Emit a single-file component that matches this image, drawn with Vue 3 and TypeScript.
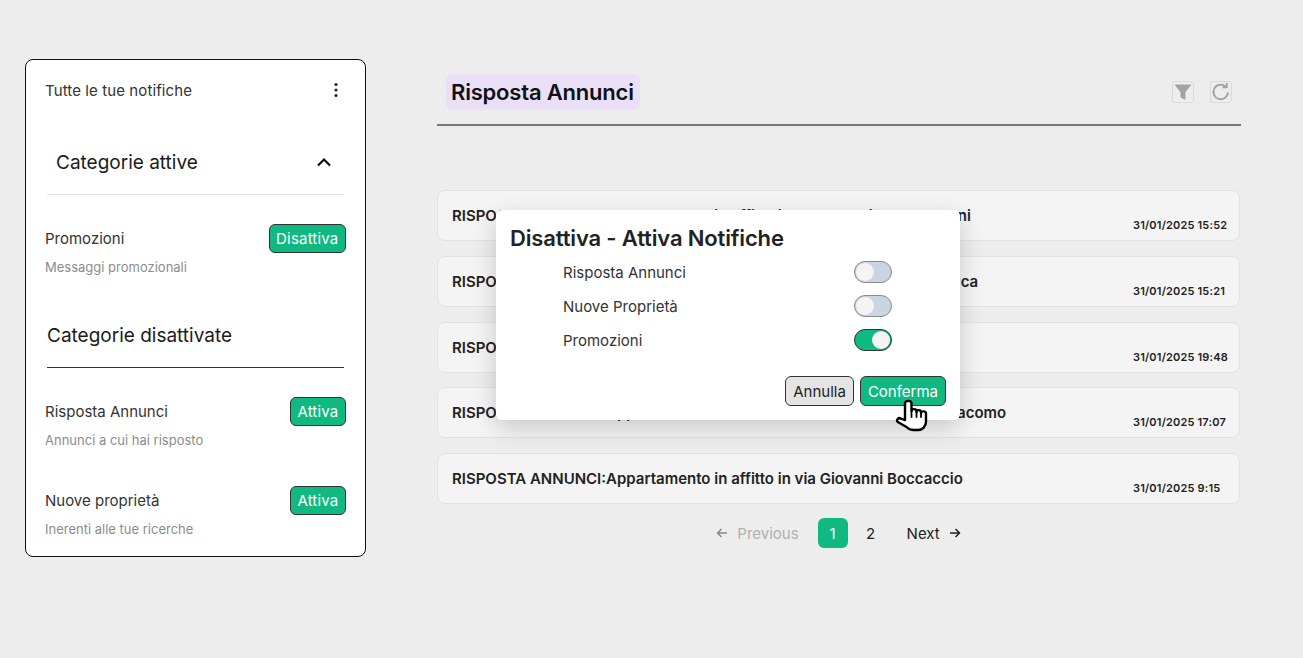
<script setup lang="ts">
import { ref } from 'vue'

const activeCats = [{ name: 'Promozioni', desc: 'Messaggi promozionali' }]
const disabledCats = [
  { name: 'Risposta Annunci', desc: 'Annunci a cui hai risposto' },
  { name: 'Nuove proprietà', desc: 'Inerenti alle tue ricerche' },
]

const notifications = [
  { title: 'RISPOSTA ANNUNCI:Appartamento in affitto in largo Guglielmo Marconi', date: '31/01/2025 15:52' },
  { title: 'RISPOSTA ANNUNCI:Appartamento in affitto in piazzale della Repubblica', date: '31/01/2025 15:21' },
  { title: 'RISPOSTA ANNUNCI:Appartamento in affitto in via Roma', date: '31/01/2025 19:48' },
  { title: 'RISPOSTA ANNUNCI:Appartamento in affitto in via San Giovanni De Giacomo', date: '31/01/2025 17:07' },
  { title: 'RISPOSTA ANNUNCI:Appartamento in affitto in via Giovanni Boccaccio', date: '31/01/2025 9:15' },
]

const toggles = ref([
  { label: 'Risposta Annunci', on: false },
  { label: 'Nuove Proprietà', on: false },
  { label: 'Promozioni', on: true },
])
</script>

<template>
  <div class="page">
    <aside class="side">
      <div class="side-head">
        <span>Tutte le tue notifiche</span>
        <svg width="16" height="16" viewBox="0 0 16 16" fill="#222">
          <circle cx="8" cy="2.500" r="1.600" />
          <circle cx="8" cy="8" r="1.600" />
          <circle cx="8" cy="13.500" r="1.600" />
        </svg>
      </div>

      <div class="acc-head">
        <span>Categorie attive</span>
        <svg width="16" height="10" viewBox="0 0 16 10" fill="none" stroke="#111" stroke-width="2.200">
          <path d="M2 8.500 8 2.500l6 6" />
        </svg>
      </div>
      <div v-for="c in activeCats" :key="c.name" class="cat first">
        <div class="cat-row">
          <span>{{ c.name }}</span>
          <button class="green small">Disattiva</button>
        </div>
        <p>{{ c.desc }}</p>
      </div>

      <div class="off-head">Categorie disattivate</div>
      <div v-for="c in disabledCats" :key="c.name" class="cat">
        <div class="cat-row">
          <span>{{ c.name }}</span>
          <button class="green small">Attiva</button>
        </div>
        <p>{{ c.desc }}</p>
      </div>
    </aside>

    <main class="main">
      <header class="main-head">
        <h1>Risposta Annunci</h1>
        <div class="tools">
          <span class="tool">
            <svg width="18" height="18" viewBox="0 0 18 18" fill="#a3a3a3">
              <path d="M0.500 1.500h17L11.500 9.200V17l-5-2.400V9.200z" />
            </svg>
          </span>
          <span class="tool">
            <svg width="20" height="20" viewBox="0 0 20 20" fill="none" stroke="#a3a3a3" stroke-width="1.900">
              <path d="M17 10.500a7.300 7.300 0 1 1-2.400-6" />
              <path d="M15.800 1v4.200h-4.300" />
            </svg>
          </span>
        </div>
      </header>

      <div class="list">
        <div v-for="n in notifications" :key="n.date" class="item">
          <span class="title">{{ n.title }}</span>
          <span class="date">{{ n.date }}</span>
        </div>
      </div>

      <nav class="pager">
        <span class="prev">
          <svg width="12" height="12" viewBox="0 0 12 12" fill="none" stroke="#8a8a8a" stroke-width="1.500">
            <path d="M11 6H1.500M5.500 2 1.500 6l4 4" />
          </svg>
          Previous
        </span>
        <span class="num on">1</span>
        <span class="num">2</span>
        <span class="next">
          Next
          <svg width="12" height="12" viewBox="0 0 12 12" fill="none" stroke="#222" stroke-width="1.500">
            <path d="M1 6h9.500M6.500 2l4 4-4 4" />
          </svg>
        </span>
      </nav>

      <section class="modal">
        <h2>Disattiva - Attiva Notifiche</h2>
        <div class="toggles">
          <div v-for="t in toggles" :key="t.label" class="toggle-row">
            <span>{{ t.label }}</span>
            <span class="switch" :class="{ on: t.on }"><i /></span>
          </div>
        </div>
        <div class="actions">
          <button class="plain">Annulla</button>
          <button class="green">Conferma</button>
        </div>
        <svg class="hand" width="34" height="33" viewBox="0 0 34 33" fill="#fff" stroke="#000" stroke-width="2.400" stroke-linejoin="round" stroke-linecap="round">
          <path d="M10 21V4.500c0-3.500 6.500-3.500 6.500 0V12c0-2.500 5-2.500 5 0v1c0-2.500 4.500-2.500 4.500 0v1c0-2.300 5-2.300 5 .5v8c0 5-3.500 8.500-8 8.500h-4.500c-3 0-5-1-7-3L2.800 23c-2-2 .7-5 3-3.300z" />
          <path d="M16.500 12v6M21.500 13v5M26 14v4" fill="none" stroke-width="1.800" />
        </svg>
      </section>
    </main>
  </div>
</template>

<style>
html,
body {
  background: #ededed;
}
</style>

<style scoped>
.page {
  display: flex;
  align-items: flex-start;
  gap: 71px;
  padding: 59px 0 0 25px;
  font-family: Inter, 'Noto Sans', sans-serif;
  color: #222;
  width: 1278px;
  box-sizing: border-box;
  height: 658px;
  overflow: hidden;
}

.side {
  width: 341px;
  height: 498px;
  box-sizing: border-box;
  flex: none;
  background: #fff;
  border: 1px solid #111;
  border-radius: 8px;
  padding: 0 19px;
}

.side-head {
  display: flex;
  justify-content: space-between;
  align-items: center;
  height: 60px;
  padding-right: 2px;
  font-size: 15px;
  letter-spacing: 0.1px;
  color: #333;
}

.acc-head {
  display: flex;
  justify-content: space-between;
  align-items: center;
  margin: 0 2px 0 2px;
  padding: 10px 12px 0 9px;
  height: 75px;
  border-bottom: 1px solid #e4e4e4;
  font-size: 19px;
  color: #1a1a1a;
  box-sizing: border-box;
}

.cat {
  margin-top: 35px;
}

.cat.first {
  margin-top: 29px;
}

.cat-row {
  display: flex;
  justify-content: space-between;
  align-items: center;
  font-size: 15px;
  color: #333;
}

.cat p {
  margin: 4px 0 0;
  font-size: 13px;
  line-height: 20px;
  color: #8c8c8c;
}

.off-head {
  margin: 35px 2px 0 2px;
  height: 56px;
  padding-top: 12px;
  box-sizing: border-box;
  border-bottom: 1px solid #333;
  font-size: 19px;
  line-height: 23px;
  color: #1a1a1a;
}

.off-head + .cat {
  margin-top: 29px;
}

.off-head + .cat + .cat {
  margin-top: 36px;
}

button {
  font-family: inherit;
  font-size: 15px;
  box-sizing: border-box;
  height: 30px;
  border: 1px solid #333;
  border-radius: 6px;
  padding: 0 7px;
}

button.small {
  height: 29px;
  padding: 0 6.500px;
  letter-spacing: 0.2px;
}

.green {
  background: #10b981;
  color: #fff;
}

.plain {
  background: #e4e4e4;
  color: #222;
}

.main {
  position: relative;
  width: 804px;
  flex: none;
}

.main-head {
  display: flex;
  justify-content: space-between;
  align-items: center;
  height: 67px;
  box-sizing: border-box;
  padding: 0 9px;
  border-bottom: 2px solid #777;
}

h1 {
  margin: 0;
  padding: 0 6px 0 5px;
  height: 36px;
  line-height: 36px;
  border-radius: 7px;
  background: #e9e0f8;
  font-size: 22px;
  font-weight: 600;
  letter-spacing: -0.2px;
  color: #111;
}

.tools {
  display: flex;
  gap: 16px;
}

.tool {
  width: 22px;
  height: 22px;
  box-sizing: border-box;
  display: flex;
  align-items: center;
  justify-content: center;
  border: 1px solid #dadada;
  border-radius: 3px;
}

.list {
  display: flex;
  flex-direction: column;
  gap: 14.750px;
  margin-top: 64px;
}

.item {
  display: flex;
  justify-content: space-between;
  height: 51px;
  width: 803px;
  box-sizing: border-box;
  background: #f4f4f4;
  border: 1px solid #e2e2e2;
  border-radius: 8px;
  padding: 0 12px 0 14px;
}

.title {
  font-size: 15px;
  font-weight: 600;
  line-height: 50px;
  color: #222;
}

.date {
  align-self: flex-end;
  width: 94px;
  font-size: 11px;
  font-weight: 600;
  letter-spacing: 0.18px;
  line-height: 16px;
  margin-bottom: 7px;
  white-space: nowrap;
  color: #222;
}

.pager {
  display: flex;
  align-items: center;
  justify-content: center;
  margin-top: 14px;
  font-size: 15px;
  width: 803px;
}

.prev,
.next {
  display: inline-flex;
  align-items: center;
  gap: 9px;
}

.prev {
  color: #b0b0b0;
  margin-right: 19px;
}

.next {
  margin-left: 13px;
}

.num {
  width: 30px;
  height: 30px;
  display: flex;
  align-items: center;
  justify-content: center;
  border-radius: 6px;
  margin-right: 8px;
}

.num.on {
  background: #10b981;
  color: #fff;
}

.modal {
  position: absolute;
  left: 59px;
  top: 151px;
  width: 464px;
  height: 210px;
  box-sizing: border-box;
  padding: 14px 14px 0;
  background: #fff;
  border-radius: 6px;
  box-shadow: 0 8px 24px rgba(0, 0, 0, 0.18);
}

h2 {
  margin: 0;
  font-size: 22px;
  line-height: 28px;
  font-weight: 600;
  letter-spacing: -0.15px;
  color: #222;
}

.toggles {
  margin: 9px 54px 0 53px;
  display: flex;
  flex-direction: column;
  gap: 12px;
}

.toggle-row {
  display: flex;
  justify-content: space-between;
  align-items: center;
  font-size: 15px;
  color: #333;
}

.switch {
  display: block;
  width: 38px;
  height: 22px;
  box-sizing: border-box;
  border: 1px solid #8a8a8a;
  border-radius: 11px;
  background: #cbd5e1;
  padding: 1px;
}

.switch i {
  display: block;
  width: 18px;
  height: 18px;
  border-radius: 50%;
  background: #f4f4f5;
}

.switch.on {
  background: #10b981;
  border-color: #333;
}

.switch.on i {
  margin-left: 16px;
}

.actions {
  display: flex;
  justify-content: flex-end;
  gap: 6px;
  margin-top: 25px;
}

.hand {
  position: absolute;
  left: 399px;
  top: 189px;
}
</style>
